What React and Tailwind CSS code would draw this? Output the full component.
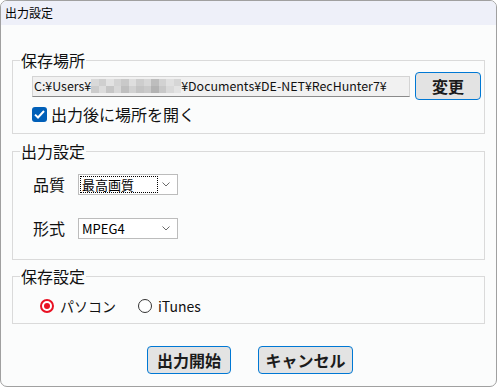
import { useState } from 'react';

const jp = { fontFamily: '"Noto Sans CJK JP", "Noto Sans", sans-serif' };

const mosaic = [
  ['#d9d9d9', '#cfcfcf', '#e2e2e2', '#d4d4d4', '#c9c9c9', '#dedede', '#cdcdcd', '#d7d7d7', '#bdbdbd', '#d2d2d2', '#e0e0e0', '#d6d6d6'],
  ['#cccccc', '#dcdcdc', '#c6c6c6', '#d8d8d8', '#bfbfbf', '#d1d1d1', '#c4c4c4', '#cacaca', '#b3b3b3', '#c8c8c8', '#d9d9d9', '#e3e3e3'],
];

const Chevron = () => (
  <svg width="8" height="5" viewBox="0 0 8 5" className="text-[#6b6b6b]">
    <path d="M0.5 0.5 L4 4 L7.5 0.5" fill="none" stroke="currentColor" strokeWidth="1" />
  </svg>
);

const Select = ({ value, focused }) => (
  <div className="flex h-[21px] w-[100px] items-center justify-between border border-[#bcbcbc] bg-white pl-[2px] pr-[7px]">
    <span
      className={`px-[1px] text-[13px] leading-[15px] text-black ${focused ? 'outline outline-1 outline-dotted outline-black' : ''}`}
      style={focused ? { width: 76 } : undefined}
    >
      {value}
    </span>
    <Chevron />
  </div>
);

const Radio = ({ checked }) =>
  checked ? (
    <span className="flex h-[14px] w-[14px] items-center justify-center rounded-full border-[2px] border-[#e81123] bg-white">
      <span className="h-[6px] w-[6px] rounded-full bg-[#e81123]" />
    </span>
  ) : (
    <span className="h-[14px] w-[14px] rounded-full border-[1.5px] border-[#333333] bg-white" />
  );

const Group = ({ title, className, children }) => (
  <fieldset className={`border border-[#dadada] px-0 ${className}`}>
    <legend className="ml-[7px] px-[1px] text-[16px] leading-[20px] text-[#111]">{title}</legend>
    {children}
  </fieldset>
);

const WinButton = ({ children, className }) => (
  <button className={`flex h-[28px] items-center justify-center rounded-[4px] border border-[#0078d4] bg-[#e3e3e3] text-[16px] font-bold text-[#1b1b1b] ${className}`}>
    {children}
  </button>
);

export default function App() {
  const [target, setTarget] = useState('pc');

  return (
    <div className="h-[387px] w-[497px] bg-white" style={jp}>
      <div className="flex h-[387px] w-[497px] flex-col overflow-hidden rounded-[7px] border border-[#a0a0a0] bg-[#fbfcfc]">
        {/* Title bar */}
        <div className="flex h-[24px] items-center bg-[#eef0f9] pl-[4px] text-[12px] text-black">出力設定</div>

        <div className="flex-1 px-[11px]">
          {/* 保存場所 */}
          <Group title="保存場所" className="mt-[25px] pb-[9px] pt-[2px]">
            <div className="flex items-center pl-[19px] pr-[3px]">
              <div className="flex h-[21px] w-[378px] items-center border border-[#d4d4d4] border-b-[#8a8a8a] bg-[#f1f1f1] pl-[1px] text-[12.4px] text-[#111]">
                <span>C:¥Users¥</span>
                <span className="flex flex-col">
                  {mosaic.map((row, i) => (
                    <span key={i} className="flex">
                      {row.map((c, j) => (
                        <span key={j} className="h-[7px] w-[7.5px]" style={{ backgroundColor: c }} />
                      ))}
                    </span>
                  ))}
                </span>
                <span>¥Documents¥DE-NET¥RecHunter7¥</span>
              </div>
              <WinButton className="ml-[5px] w-[66px]">変更</WinButton>
            </div>
            <label className="mt-[4px] flex h-[20px] items-center pl-[19px]">
              <span className="flex h-[15px] w-[15px] items-center justify-center rounded-[3px] bg-[#005fb8]">
                <svg width="11" height="9" viewBox="0 0 11 9">
                  <path d="M1 4.6 L4 7.5 L10 1" fill="none" stroke="white" strokeWidth="2" />
                </svg>
              </span>
              <span className="ml-[4px] text-[16px] leading-[20px] text-[#111]">出力後に場所を開く</span>
            </label>
          </Group>

          {/* 出力設定 */}
          <Group title="出力設定" className="mt-[7px] pb-[20px] pt-[13px]">
            <div className="flex items-center pl-[20px]">
              <span className="w-[45px] text-[16px] leading-[21px] text-[#111]">品質</span>
              <Select value="最高画質" focused />
            </div>
            <div className="mt-[23px] flex items-center pl-[20px]">
              <span className="w-[45px] text-[16px] leading-[21px] text-[#111]">形式</span>
              <Select value="MPEG4" />
            </div>
          </Group>

          {/* 保存設定 */}
          <Group title="保存設定" className="mt-[6px] pb-[7px] pt-[10px]">
            <div className="flex h-[20px] items-center pl-[27px] text-[14px] text-[#111]">
              <button className="flex items-center" onClick={() => setTarget('pc')}>
                <Radio checked={target === 'pc'} />
                <span className="ml-[6px]">パソコン</span>
              </button>
              <button className="ml-[22px] flex items-center" onClick={() => setTarget('itunes')}>
                <Radio checked={target === 'itunes'} />
                <span className="ml-[6px]">iTunes</span>
              </button>
            </div>
          </Group>

          {/* Buttons */}
          <div className="mt-[22px] flex justify-center gap-[27px] pl-[3px]">
            <WinButton className="w-[84px]">出力開始</WinButton>
            <WinButton className="w-[95px]">キャンセル</WinButton>
          </div>
        </div>
      </div>
    </div>
  );
}
